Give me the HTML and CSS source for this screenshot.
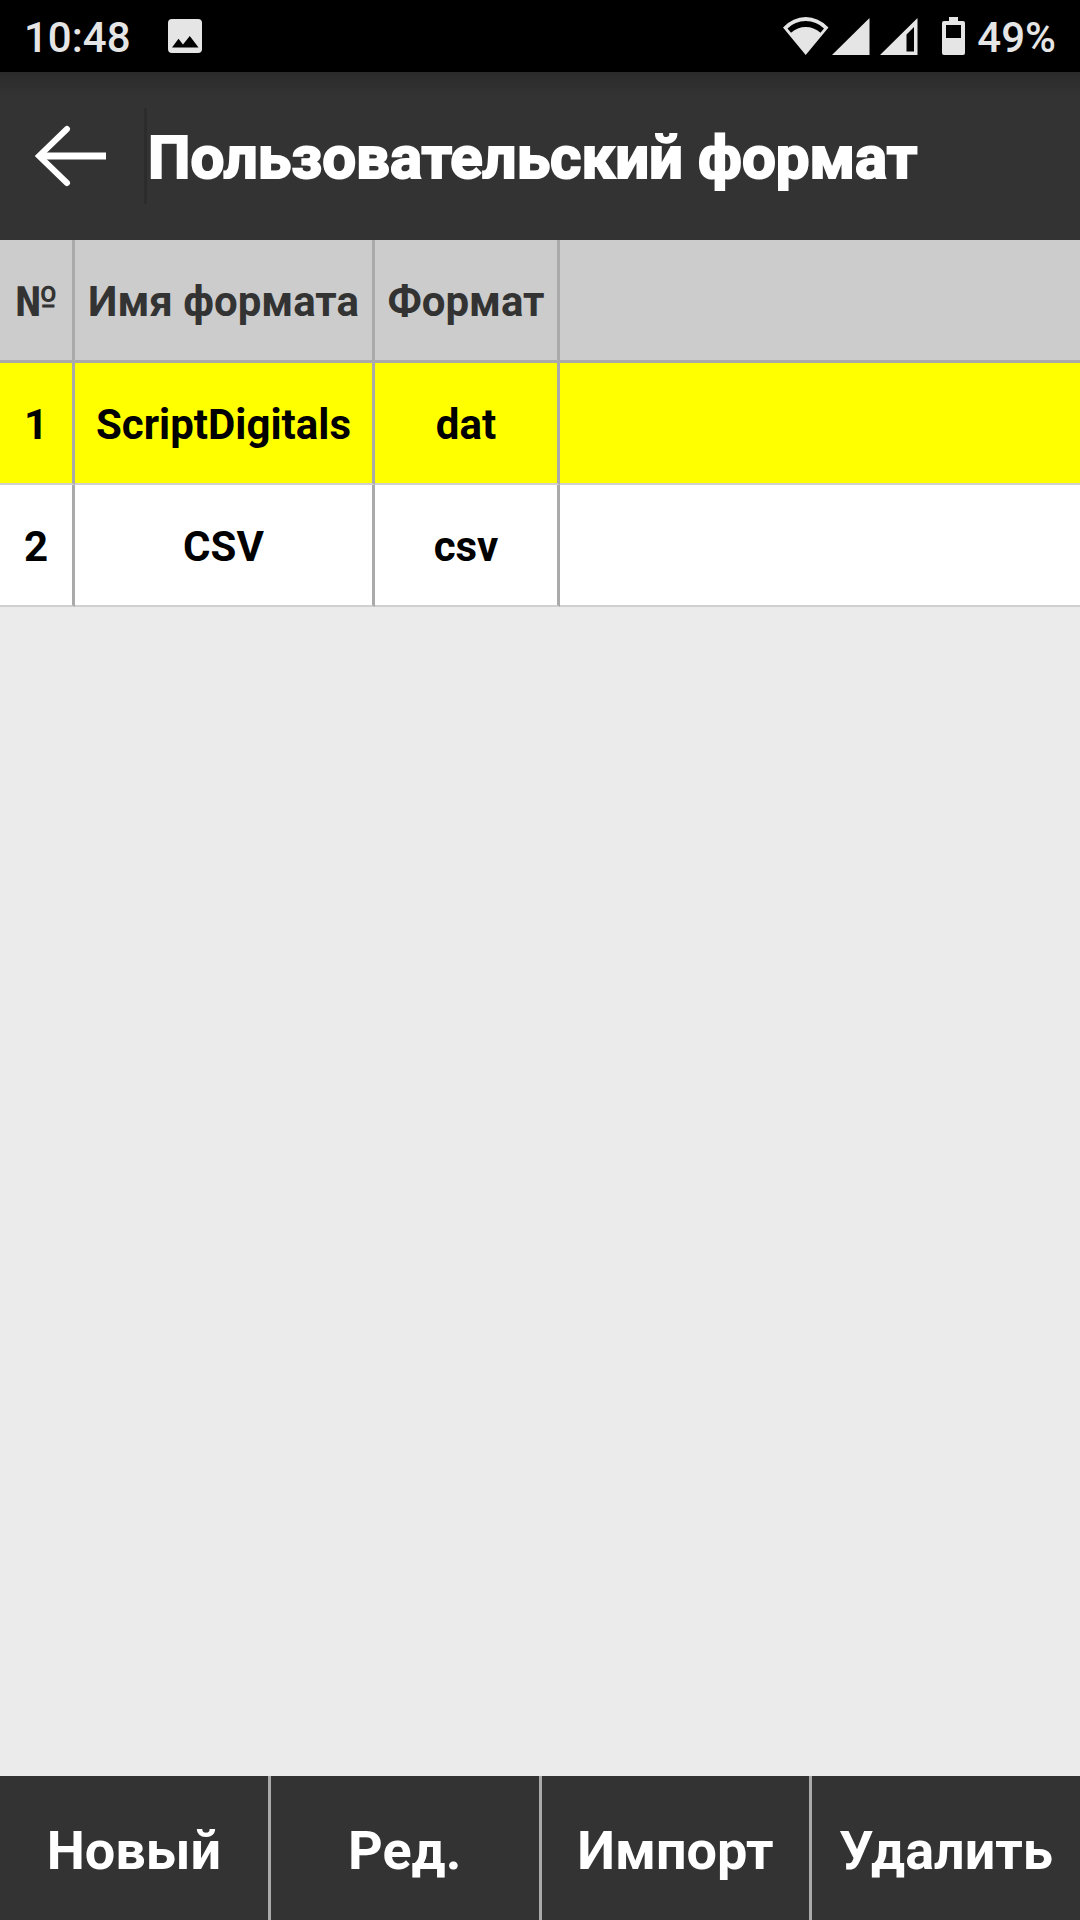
FILE: index.html
```html
<!DOCTYPE html>
<html lang="ru">
<head>
<meta charset="utf-8">
<meta name="viewport" content="width=device-width, initial-scale=1">
<title>Пользовательский формат</title>
<link rel="stylesheet" href="styles.css">
</head>
<body>
<div class="screen">
  <div class="status">
    <span class="status-text">10:48</span>
    <svg class="icon-picture" width="36" height="36" viewBox="0 0 36 36" aria-hidden="true"><path fill="#e5e5e5" fill-rule="evenodd" d="M5 1h26a4 4 0 0 1 4 4v26a4 4 0 0 1-4 4H5a4 4 0 0 1-4-4V5a4 4 0 0 1 4-4zM5 29.500h26.500L22.800 18 16 26.500l-4.500-5.800z"/></svg>
    <div class="status-right">
      <svg width="46" height="40" viewBox="0 0 46 40" aria-hidden="true"><path fill="#e5e5e5" fill-rule="evenodd" d="M0 11.500Q10 1 22.700 1T45.500 11.500L22.700 39zM4.500 12.500L8 16.800Q14.500 11 22.700 11T37.500 16.800L41 12.500Q33.500 5 22.700 5T4.500 12.500z"/></svg>
      <svg class="icon-signal" width="38" height="40" viewBox="0 0 38 40" aria-hidden="true"><path fill="#e5e5e5" d="M37.500 2v37H0z"/></svg>
      <svg class="icon-signal-low" width="38" height="40" viewBox="0 0 38 40" aria-hidden="true"><path fill="#e5e5e5" fill-rule="evenodd" d="M37.500 2v37H0zM34 11l-7.500 7.500V35.500H34z"/></svg>
      <svg class="icon-battery" width="23" height="40" viewBox="0 0 23 40" aria-hidden="true"><path fill="#e5e5e5" fill-rule="evenodd" d="M7 1h9v4h5a2 2 0 0 1 2 2v30a2 2 0 0 1-2 2H2a2 2 0 0 1-2-2V7a2 2 0 0 1 2-2h5zM4 9v13h15V9z"/></svg>
      <span class="status-text">49%</span>
    </div>
  </div>
  <header class="topbar">
    <button class="back" type="button" aria-label="Назад">
      <svg width="72" height="64" viewBox="0 0 72 64" fill="none" stroke="#fff" stroke-width="6" stroke-linecap="round" aria-hidden="true"><path d="M32 5L4 32l28 27"/><path stroke-linecap="butt" stroke-width="7" d="M4 32h67"/></svg>
    </button>
    <h1 class="title">Пользовательский формат</h1>
  </header>
  <main class="content">
    <table class="formats">
      <colgroup><col class="col-num"><col class="col-name"><col class="col-ext"><col></colgroup>
      <thead><tr><th scope="col">№</th><th scope="col">Имя формата</th><th scope="col">Формат</th><td></td></tr></thead>
      <tbody>
        <tr class="selected"><td>1</td><td>ScriptDigitals</td><td>dat</td><td></td></tr>
        <tr><td>2</td><td>CSV</td><td>csv</td><td></td></tr>
      </tbody>
    </table>
  </main>
  <footer class="actions">
    <button type="button">Новый</button>
    <button type="button">Ред.</button>
    <button type="button">Импорт</button>
    <button type="button">Удалить</button>
  </footer>
</div>
</body>
</html>
```
FILE: styles.css
```css
* { box-sizing: border-box; }

body {
  margin: 0;
  font-family: Roboto, "Liberation Sans", sans-serif;
  background: #ebebeb;
}

.screen {
  display: flex;
  flex-direction: column;
  min-height: 100vh;
}

button {
  margin: 0;
  border: 0;
  border-radius: 0;
  font: inherit;
  color: inherit;
  background: #333;
}

svg { display: block; flex: none; }

.status {
  display: flex;
  align-items: center;
  height: 72px;
  padding: 0 24px;
  background: #000;
  color: #e5e5e5;
  font-size: 42px;
  font-weight: 500;
}

.status-text { padding-top: 3px; }

.icon-picture { margin-left: 36px; }

.status-right {
  display: flex;
  align-items: center;
  margin-left: auto;
}

.icon-signal { margin-left: 3px; }
.icon-signal-low { margin-left: 10px; }
.icon-battery { margin: 0 12px 0 24px; }

.topbar {
  display: flex;
  align-items: center;
  height: 168px;
  background: linear-gradient(#2b2b2b, #333 24px);
}

.back {
  width: 147px;
  height: 96px;
  padding: 0 0 0 35px;
  border-right: 3px solid #2c2c2c;
  background: none;
}

.title {
  margin: 0;
  padding: 3px 0 0 1px;
  color: #fff;
  font-size: 60px;
  font-weight: 700;
  white-space: nowrap;
  -webkit-text-stroke: 2px #fff;
}

.content { flex: 1; }

.formats {
  width: 100%;
  table-layout: fixed;
  border-collapse: separate;
  border-spacing: 0;
  font-size: 42px;
  font-weight: 700;
  text-align: center;
}

.col-num { width: 75px; }
.col-name { width: 300px; }
.col-ext { width: 185px; }

.formats th,
.formats td {
  height: 122px;
  padding: 3px 0 0;
  border-right: 3px solid #aaa;
  border-bottom: 2px solid #d0d0d0;
  background: #fff;
  color: #000;
  white-space: nowrap;
}

.formats thead th,
.formats thead td {
  height: 123px;
  border-bottom: 3px solid #aaa;
  background: #ccc;
  color: #333;
}

.formats .selected td { background: #ff0; }

.formats tr > :last-child { border-right: 0; }

.actions {
  display: grid;
  grid-template-columns: repeat(4, 1fr);
  gap: 3px;
  background: #aaa;
}

.actions button {
  height: 144px;
  padding: 4px 0 0;
  color: #fff;
  font-size: 54px;
  font-weight: 700;
}
```
